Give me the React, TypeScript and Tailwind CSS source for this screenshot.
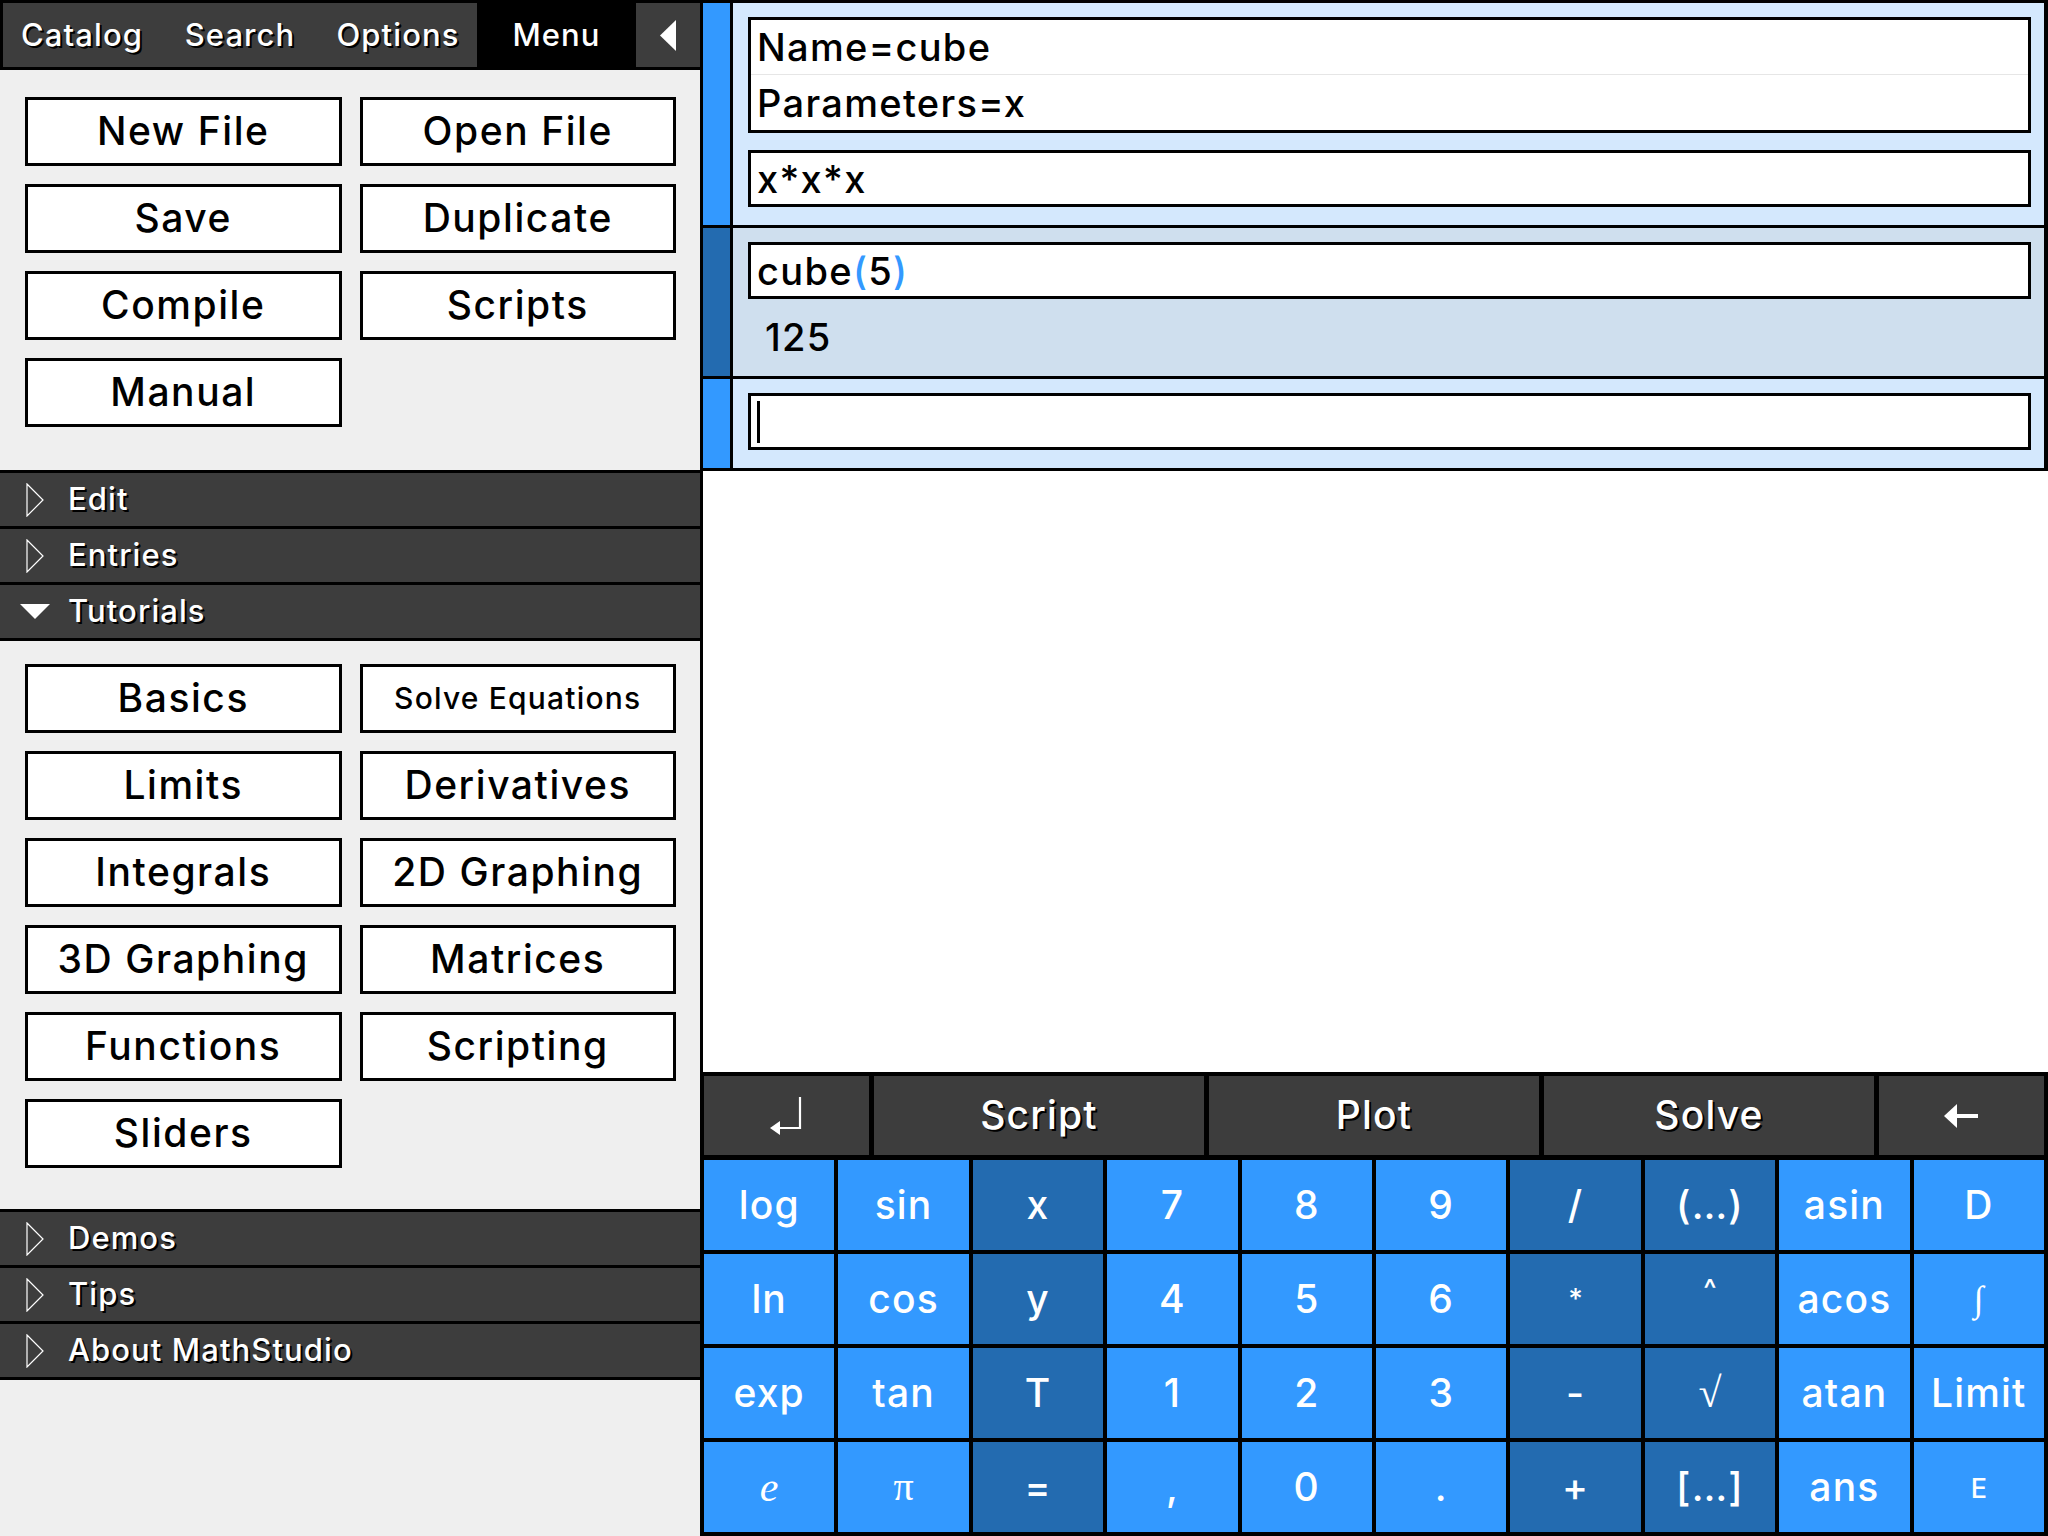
import type { ReactNode } from 'react';

/**
 * MathStudio-style workspace: menu panel on the left,
 * entry list and calculator keypad on the right.
 */

const fileButtons = ['New File', 'Open File', 'Save', 'Duplicate', 'Compile', 'Scripts', 'Manual'];
const tutorialButtons = [
  'Basics',
  'Solve Equations',
  'Limits',
  'Derivatives',
  'Integrals',
  '2D Graphing',
  '3D Graphing',
  'Matrices',
  'Functions',
  'Scripting',
  'Sliders',
];

const shadow = '[text-shadow:2px_2px_0_#000]';

function MenuButton({ label }: { label: string }) {
  const small = label === 'Solve Equations';
  return (
    <button
      className={`flex h-[69px] items-center justify-center border-[3px] border-black bg-white font-medium tracking-[0.04em] text-black ${
        small ? 'text-[30px]' : 'text-[39px]'
      }`}
    >
      {label}
    </button>
  );
}

function Section({ title, open = false, last = false }: { title: string; open?: boolean; last?: boolean }) {
  return (
    <div
      className={`flex items-center border-t-[3px] border-black bg-[#3d3d3d] pl-[20px] text-[31px] font-medium tracking-[0.035em] text-white ${shadow} ${
        last ? 'h-[59px] border-b-[3px]' : 'h-[56px]'
      }`}
    >
      <span className="flex w-[30px] items-center justify-center">
        {open ? (
          <svg width="30" height="15" viewBox="0 0 30 15">
            <polygon points="0,0 30,0 15,15" fill="#fff" />
          </svg>
        ) : (
          <svg width="18" height="34" viewBox="0 0 18 34">
            <polygon points="1,1 17,17 1,33" fill="none" stroke="#fff" strokeWidth="1.2" />
          </svg>
        )}
      </span>
      <span className="ml-[18px]">{title}</span>
    </div>
  );
}

function Header() {
  return (
    <div className="flex h-[70px] shrink-0 bg-black py-[3px] pl-[3px] text-[31px] font-medium tracking-[0.035em] text-white">
      <div className={`flex w-[158px] items-center justify-center bg-[#3d3d3d] ${shadow}`}>Catalog</div>
      <div className={`flex w-[158px] items-center justify-center bg-[#3d3d3d] ${shadow}`}>Search</div>
      <div className={`flex w-[158px] items-center justify-center bg-[#3d3d3d] ${shadow}`}>Options</div>
      <div className="flex w-[159px] items-center justify-center bg-black">Menu</div>
      <div className="flex flex-1 items-center justify-center bg-[#3d3d3d]">
        <svg width="16" height="31" viewBox="0 0 16 31">
          <polygon points="16,0 16,31 0,15.5" fill="#fff" />
        </svg>
      </div>
    </div>
  );
}

function Box({ children, className = '' }: { children: ReactNode; className?: string }) {
  return (
    <div className={`border-[3px] border-black bg-white text-[38px] font-medium leading-none tracking-[0.035em] text-black ${className}`}>
      {children}
    </div>
  );
}

function Entry({ strip, bg, children, className = '' }: { strip: string; bg: string; children: ReactNode; className?: string }) {
  return (
    <div className="flex border-b-[3px] border-black">
      <div className={`w-[30px] shrink-0 border-r-[3px] border-black ${strip}`} />
      <div className={`flex-1 pl-[15px] pr-[13px] ${bg} ${className}`}>{children}</div>
    </div>
  );
}

type KeyDef = { label: ReactNode; cls?: string };

const sans = "font-['Inter',sans-serif] font-medium tracking-[0.03em] text-[39px]";
const serif = "font-['Liberation_Serif',serif] font-normal";

const keyRows: KeyDef[][] = [
  [{ label: 'log' }, { label: 'sin' }, { label: 'x' }, { label: '7' }, { label: '8' }, { label: '9' }, { label: '/' }, { label: '(…)' }, { label: 'asin' }, { label: 'D' }],
  [
    { label: 'ln' },
    { label: 'cos' },
    { label: 'y' },
    { label: '4' },
    { label: '5' },
    { label: '6' },
    { label: '*', cls: 'font-medium text-[28px]' },
    { label: '^', cls: 'font-medium text-[28px] pb-[20px]' },
    { label: 'acos' },
    { label: '∫', cls: `${serif} text-[36px]` },
  ],
  [
    { label: 'exp' },
    { label: 'tan' },
    { label: 'T' },
    { label: '1' },
    { label: '2' },
    { label: '3' },
    { label: '-' },
    { label: '√', cls: `${serif} text-[42px]` },
    { label: 'atan' },
    { label: 'Limit' },
  ],
  [
    { label: 'e', cls: `${serif} italic text-[42px]` },
    { label: 'π', cls: `${serif} text-[40px]` },
    { label: '=' },
    { label: ',' },
    { label: '0' },
    { label: '.' },
    { label: '+' },
    { label: '[…]' },
    { label: 'ans' },
    { label: 'E', cls: 'font-medium text-[27px] pt-[4px]' },
  ],
];

const darkCols = [2, 6, 7];

function Keypad() {
  return (
    <div className="shrink-0 bg-black pb-[4px] pl-[1px] pr-[4px] pt-[4px]">
      <div className={`grid h-[79px] grid-cols-[1fr_2fr_2fr_2fr_1fr] gap-[5px] text-[39px] font-medium tracking-[0.03em] text-white ${shadow}`}>
        <div className="flex items-center justify-center bg-[#3d3d3d]">
          <svg width="34" height="38" viewBox="0 0 34 38">
            <path d="M30 0 V31 H8" fill="none" stroke="#fff" strokeWidth="2.2" />
            <polygon points="0,31 10,24 10,38" fill="#fff" />
          </svg>
        </div>
        <div className="flex items-center justify-center bg-[#3d3d3d]">Script</div>
        <div className="flex items-center justify-center bg-[#3d3d3d]">Plot</div>
        <div className="flex items-center justify-center bg-[#3d3d3d]">Solve</div>
        <div className="flex items-center justify-center bg-[#3d3d3d]">
          <svg width="36" height="24" viewBox="0 0 36 24">
            <polygon points="0,12 13,0 13,24" fill="#fff" />
            <rect x="10" y="10" width="24" height="4" fill="#fff" />
          </svg>
        </div>
      </div>
      <div className="mt-[5px] grid grid-cols-10 gap-[4px]">
        {keyRows.map((row, r) =>
          row.map((k, c) => (
            <div
              key={`${r}-${c}`}
              className={`flex h-[90px] items-center justify-center text-white ${
                darkCols.includes(c) ? 'bg-[#236bb0]' : 'bg-[#3399ff]'
              } ${k.cls ?? sans}`}
            >
              {k.label}
            </div>
          )),
        )}
      </div>
    </div>
  );
}

export default function App() {
  return (
    <div className="flex h-[1536px] w-[2048px] overflow-hidden bg-white font-['Inter',sans-serif]">
      {/* Left menu panel */}
      <aside className="flex w-[703px] shrink-0 flex-col border-r-[3px] border-black bg-[#efefef]">
        <Header />
        <div className="grid grid-cols-2 gap-[18px] pb-[43px] pl-[25px] pr-[24px] pt-[27px]">
          {fileButtons.map(b => (
            <MenuButton key={b} label={b} />
          ))}
        </div>
        <Section title="Edit" />
        <Section title="Entries" />
        <Section title="Tutorials" open last />
        <div className="grid grid-cols-2 gap-[18px] pb-[41px] pl-[25px] pr-[24px] pt-[23px]">
          {tutorialButtons.map(b => (
            <MenuButton key={b} label={b} />
          ))}
        </div>
        <Section title="Demos" />
        <Section title="Tips" />
        <Section title="About MathStudio" last />
      </aside>

      {/* Entries + keypad */}
      <main className="flex flex-1 flex-col">
        <div className="border-r-[4px] border-t-[3px] border-black">
          <Entry strip="bg-[#3399ff]" bg="bg-[#d4e8fd]" className="pb-[18px] pt-[14px]">
            <Box>
              <div className="flex h-[55px] items-center border-b border-[#e6e6e6] pl-[6px]">Name=cube</div>
              <div className="flex h-[55px] items-center pl-[6px]">Parameters=x</div>
            </Box>
            <Box className="mt-[17px] flex h-[57px] items-center pl-[6px]">x*x*x</Box>
          </Entry>
          <Entry strip="bg-[#236bb0]" bg="bg-[#cfdfee]" className="pt-[14px]">
            <Box className="flex h-[57px] items-center pl-[6px]">
              cube<span className="text-[#3399ff]">(</span>5<span className="text-[#3399ff]">)</span>
            </Box>
            <div className="flex h-[77px] items-center pl-[17px] text-[38px] font-medium tracking-[0.035em] text-black">125</div>
          </Entry>
          <Entry strip="bg-[#3399ff]" bg="bg-[#d4e8fd]" className="pb-[18px] pt-[14px]">
            <Box className="flex h-[57px] items-center pl-[6px]">
              <span className="h-[42px] w-[3px] bg-black" />
            </Box>
          </Entry>
        </div>
        <div className="flex-1 bg-white" />
        <Keypad />
      </main>
    </div>
  );
}
